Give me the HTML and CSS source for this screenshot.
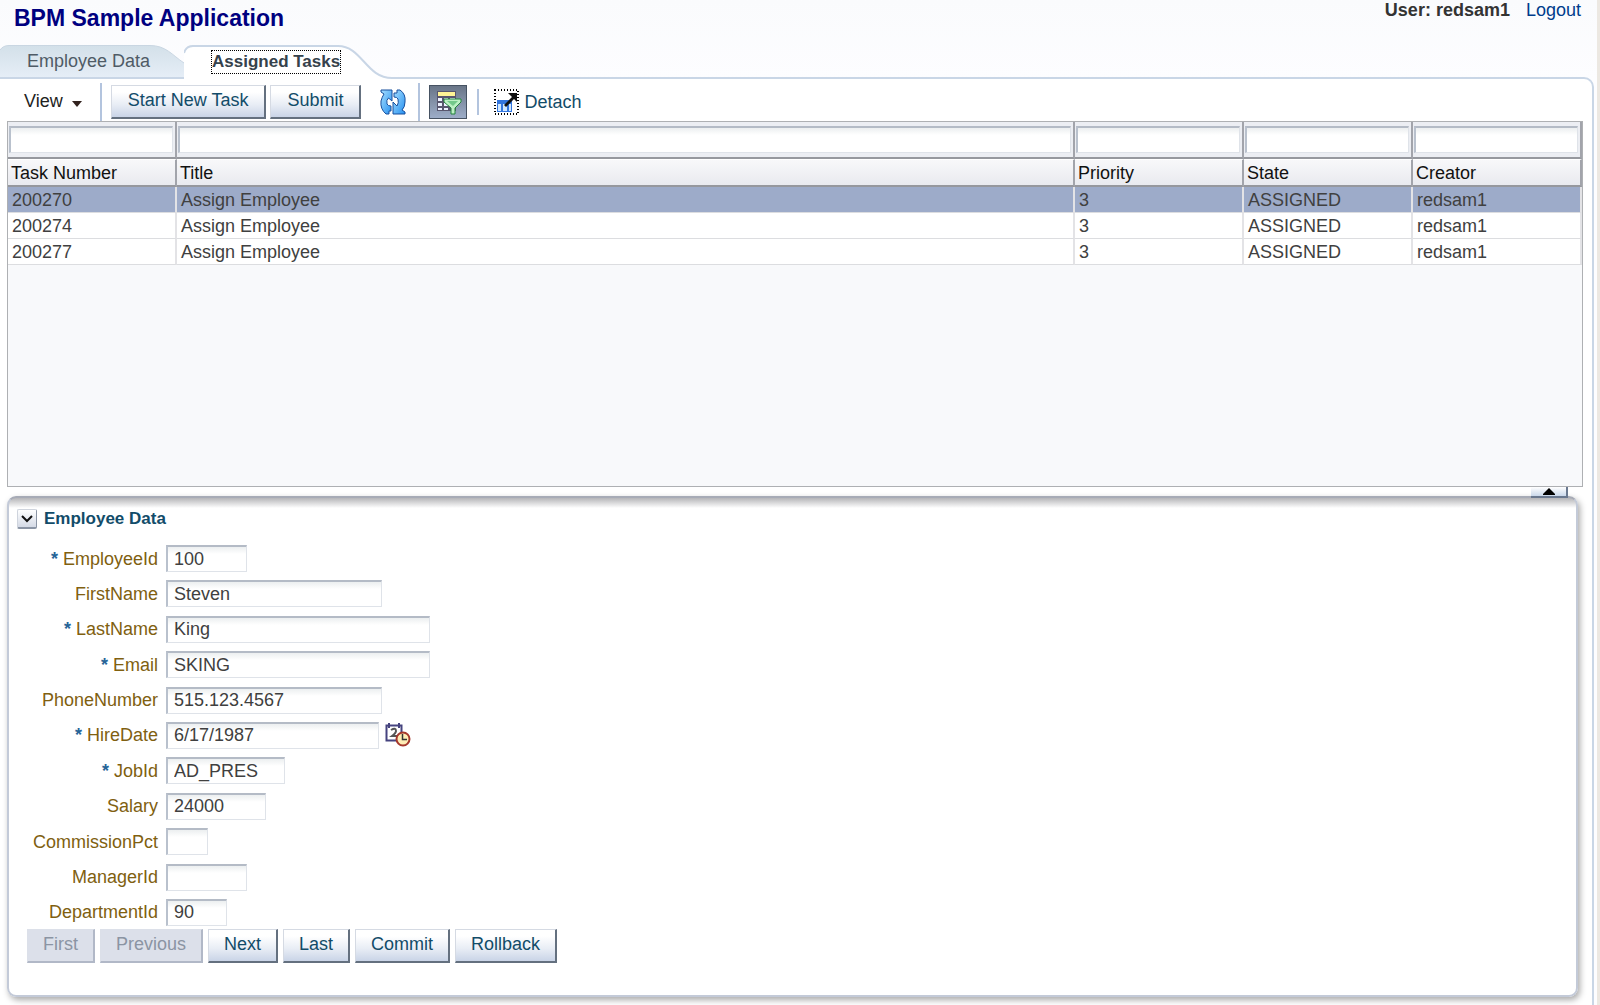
FILE: index.html
```html
<!DOCTYPE html>
<html lang="en">
<head>
<meta charset="utf-8">
<meta name="viewport" content="width=device-width, initial-scale=1">
<title>BPM Sample Application</title>
<link rel="stylesheet" href="styles.css">
</head>
<body>
<header class="header">
  <h1 class="title">BPM Sample Application</h1>
  <div class="user"><strong>User: redsam1</strong><a href="#logout">Logout</a></div>
</header>
<nav class="tabs">
  <a class="tab tab-data" href="#data">
    <svg class="tab-shape" viewBox="0 0 184 34" preserveAspectRatio="none" aria-hidden="true"><defs><linearGradient id="tg" x1="0" y1="0" x2="0" y2="1"><stop offset="0" stop-color="#d3e0e9"/><stop offset="1" stop-color="#e6eef7"/></linearGradient></defs><path d="M0 5Q3 .5 9 .5H150C166 .5 172 10 184 18V33H0Z" fill="url(#tg)"/><path d="M0 5Q3 .5 9 .5H150C166 .5 172 10 184 18" fill="none" stroke="#c9d6e2"/><path d="M0 33H184" stroke="#c9d6e6" stroke-width="2"/></svg>
    <span>Employee Data</span>
  </a>
  <a class="tab tab-tasks" href="#tasks" aria-current="page">
    <svg class="tab-shape" viewBox="0 0 208 34" preserveAspectRatio="none" aria-hidden="true"><path d="M0 34V8Q2 1 9 1H154C178 1 182 33 208 33V34Z" fill="#fff"/><path d="M0 8Q2 1 9 1H154C178 1 182 33 208 33" fill="none" stroke="#c9d6e6" stroke-width="2"/></svg>
    <span class="focus">Assigned Tasks</span>
  </a>
</nav>
<main class="frame">
  <div class="toolbar">
    <button class="view" type="button">View<svg width="10" height="6" viewBox="0 0 10 6" aria-hidden="true"><path d="M0 0H10L5 6Z" fill="#32221e"/></svg></button>
    <span class="sep tall"></span>
    <button class="btn" type="button">Start New Task</button>
    <button class="btn" type="button">Submit</button>
    <button class="icon-btn refresh" type="button" aria-label="Refresh"><svg width="28" height="28" viewBox="0 0 28 28"><defs><linearGradient id="bl" x1="0" y1="0" x2="1" y2="1"><stop offset="0" stop-color="#a8e0ff"/><stop offset="1" stop-color="#248ff0"/></linearGradient></defs><path d="M2 2H13V13L9.500 10Q7 12 8 16Q9 18 12 18V23H10V26H7Q1 21 2 13Q3 9 5 6L2 4Z" fill="url(#bl)" stroke="#164f9d"/><path d="M18 2H21Q27 6 26 14Q26 19 23 22L26 24V26H14V14L18 18Q20 15 19 11Q18 9 15 9V5H18Z" fill="url(#bl)" stroke="#164f9d"/></svg></button>
    <span class="sep tall"></span>
    <button class="filter" type="button" aria-label="Query by example" aria-pressed="true"><svg width="28" height="28" viewBox="0 0 28 28"><path d="M3 3H22V23H3Z" fill="#58566e"/><path d="M4 4H21V8H4Z" fill="#fff496"/><path d="M4 10H8V13H4ZM10 10H14V13H10ZM16 10H21V13H16ZM4 15H8V18H4ZM10 15H14V18H10ZM4 20H8V22H4ZM10 20H14V22H10Z" fill="#eef1ff"/><path d="M10 11H27V14L21 20V26H17V20L10 14Z" fill="#bdf0c4" stroke="#23843d"/><path d="M13 13H24L19 18Z" fill="#73c98a"/></svg></button>
    <span class="sep"></span>
    <button class="detach" type="button"><svg width="26" height="27" viewBox="0 0 26 27" aria-hidden="true"><rect x="1" y="1" width="23" height="24" fill="none" stroke="#000" stroke-width="2" stroke-dasharray="1 2"/><path d="M3 11H18V23H3Z" fill="#3376df"/><path d="M4 15H7V22H4ZM9 15H13V22H9ZM15 15H17V22H15Z" fill="#cfe7ff"/><path d="M14 4H23V13L20 10L12 18L10 16L18 8Z" fill="#111"/></svg><span>Detach</span></button>
  </div>
  <section class="grid-box" aria-label="Tasks">
    <table class="grid">
      <colgroup><col class="c-num"><col><col class="c-num"><col class="c-num"><col class="c-num"></colgroup>
      <thead>
        <tr class="filters">
          <td><input type="text" aria-label="Filter Task Number"></td>
          <td><input type="text" aria-label="Filter Title"></td>
          <td><input type="text" aria-label="Filter Priority"></td>
          <td><input type="text" aria-label="Filter State"></td>
          <td><input type="text" aria-label="Filter Creator"></td>
        </tr>
        <tr class="heads"><th>Task Number</th><th>Title</th><th>Priority</th><th>State</th><th>Creator</th></tr>
      </thead>
      <tbody>
        <tr class="selected"><td>200270</td><td>Assign Employee</td><td>3</td><td>ASSIGNED</td><td>redsam1</td></tr>
        <tr><td>200274</td><td>Assign Employee</td><td>3</td><td>ASSIGNED</td><td>redsam1</td></tr>
        <tr><td>200277</td><td>Assign Employee</td><td>3</td><td>ASSIGNED</td><td>redsam1</td></tr>
      </tbody>
    </table>
  </section>
  <div class="splitter"><button type="button" aria-label="Collapse tasks"><svg width="12" height="7" viewBox="0 0 12 7"><path d="M0 7V6L6 0L12 6V7Z"/></svg></button></div>
  <section class="panel">
    <div class="panel-head">
      <button class="disclose" type="button" aria-label="Hide Employee Data"><svg width="12" height="8" viewBox="0 0 12 8"><path d="M1 1L6 6L11 1" fill="none" stroke="#111" stroke-width="2"/></svg></button>
      <h2>Employee Data</h2>
    </div>
    <form class="form">
      <div class="fields">
        <label for="eid"><b>*</b> EmployeeId</label><input class="w81" id="eid" value="100">
        <label for="fn">FirstName</label><input class="w216" id="fn" value="Steven">
        <label for="ln"><b>*</b> LastName</label><input class="w264" id="ln" value="King">
        <label for="em"><b>*</b> Email</label><input class="w264" id="em" value="SKING">
        <label for="ph">PhoneNumber</label><input class="w216" id="ph" value="515.123.4567">
        <label for="hd"><b>*</b> HireDate</label>
        <div class="date"><input class="w213" id="hd" value="6/17/1987"><button class="icon-btn" type="button" aria-label="Select Date and Time"><svg width="26" height="26" viewBox="0 0 26 26"><path d="M1.500 3.500H16.500V18.500H1.500Z" fill="#fff" stroke="#45437f" stroke-width="2"/><path d="M4 1V6M14 1V6" stroke="#45437f" stroke-width="2"/><path d="M6 8Q11 5 11 9Q11 11 7 14H12" fill="none" stroke="#555" stroke-width="2"/><circle cx="18" cy="17" r="6.500" fill="#ffedb5" stroke="#a5382d" stroke-width="2"/><path d="M17.500 12V17.500H22" fill="none" stroke="#333" stroke-width="1.500"/></svg></button></div>
        <label for="job"><b>*</b> JobId</label><input class="w119" id="job" value="AD_PRES">
        <label for="sal">Salary</label><input class="w100" id="sal" value="24000">
        <label for="com">CommissionPct</label><input class="w42" id="com">
        <label for="man">ManagerId</label><input class="w81" id="man">
        <label for="dep">DepartmentId</label><input class="w61" id="dep" value="90">
      </div>
      <div class="actions">
        <button class="btn" type="button" disabled>First</button>
        <button class="btn" type="button" disabled>Previous</button>
        <button class="btn" type="button">Next</button>
        <button class="btn" type="button">Last</button>
        <button class="btn" type="button">Commit</button>
        <button class="btn" type="button">Rollback</button>
      </div>
    </form>
  </section>
</main>
</body>
</html>
```
FILE: styles.css
```css
* { box-sizing: border-box; }

body {
  margin: 0;
  min-height: 100vh;
  display: flex;
  flex-direction: column;
  border-right: 3px solid #ece8e2;
  background: linear-gradient(#fafbfd, #fdfdff 80px);
  color: #404040;
  font: 18px/20px "Liberation Sans", Arial, sans-serif;
}

button, input { margin: 0; font: inherit; color: inherit; }
button { padding: 0; border: 0; background: none; }
svg { display: block; flex: none; }

/* Header */
.header {
  display: flex;
  justify-content: space-between;
  height: 45px;
  padding: 0 16px 0 14px;
}
.title { margin: 6px 0 0; font-size: 23px; line-height: 24px; color: #000080; }
.user { display: flex; gap: 16px; color: #333; }
.user a { color: #003c8c; text-decoration: none; }

/* Tabs */
.tabs { position: relative; z-index: 1; display: flex; height: 34px; }
.tab {
  position: relative;
  display: flex;
  padding-top: 6px;
  color: #4f5b66;
  text-decoration: none;
}
.tab-shape { position: absolute; inset: 0; width: 100%; height: 100%; }
.tab span { position: relative; }
.tab-data { width: 184px; padding-left: 27px; }
.tab-tasks { width: 208px; padding: 5px 0 0 27px; }
.focus {
  height: 24px;
  border: 1px dotted #000;
  font-size: 17px;
  line-height: 22px;
  font-weight: bold;
  color: #36424c;
}

/* Content frame, its top line runs on from the tabs */
.frame {
  flex: 1;
  display: flex;
  flex-direction: column;
  margin: -2px 3px 0 0;
  padding: 4px 9px 8px 7px;
  border-top: 2px solid #c9d6e6;
  border-right: 2px solid #c9d6e6;
  border-top-right-radius: 10px;
  background: #fff;
}

/* Toolbar */
.toolbar { display: flex; align-items: center; height: 38px; gap: 4px; }
.view { display: flex; align-items: center; gap: 9px; margin: 0 14px 0 17px; padding-bottom: 2px; color: #222; }
.view svg { margin-top: 6px; }
.sep { width: 2px; height: 26px; margin: 0 11px 0 6px; background: #b3c4de; }
.sep.tall { height: 38px; margin: 0 5px 0 0; }
.btn {
  height: 34px;
  padding: 0 16px 4px;
  border: 1px solid #d5dae3;
  border-right: 2px solid #64707f;
  border-bottom: 2px solid #64707f;
  background: linear-gradient(#fff 20%, #e8edf5 60%, #c9d4e7);
  color: #124c69;
}
.btn:disabled {
  border-color: #dce0e9 #b1b8c7 #b1b8c7 #dce0e9;
  background: #dce0ea;
  color: #8b94a3;
}
.refresh { margin: 0 7px 0 14px; }
.filter {
  display: grid;
  place-items: center;
  width: 38px;
  height: 34px;
  border: 1px solid #465262;
  background: linear-gradient(#697587, #9dadc8);
}
.detach { display: flex; align-items: center; gap: 4px; color: #124c69; }

/* Task grid */
.grid-box { height: 366px; border: 1px solid #aeb0b3; background: #f8f9fb; }
.grid { width: 100%; table-layout: fixed; border-collapse: separate; border-spacing: 0; }
.c-num { width: 169px; }
.filters td {
  height: 37px;
  padding: 1px 2px 1px 1px;
  border-right: 2px solid #a2a4ab;
  border-bottom: 2px solid #96989e;
  background: #eceef3;
}
.filters input { display: block; width: 100%; height: 27px; }
.heads th {
  height: 28px;
  padding: 0 3px;
  border-top: 1px solid #fff;
  border-right: 2px solid #a2a4ab;
  border-bottom: 2px solid #96989e;
  background: linear-gradient(#f8f8fa, #e9eaef);
  color: #111;
  font-weight: normal;
  text-align: left;
}
tbody td {
  height: 26px;
  padding: 0 4px;
  border-right: 2px solid #e3e3e6;
  border-bottom: 1px solid #dcdde0;
  background: #fff;
}
.selected td { background: #9dabc9; }

/* Text boxes */
input {
  height: 27px;
  padding: 0 6px;
  border: 1px solid #dfe3e9;
  border-top: 2px solid #b4bbc6;
  border-left: 2px solid #b9c1cd;
  background: linear-gradient(#eceff0, #fff 7px);
  outline: 0;
}

/* Splitter, its handle laps over the panel's edge */
.splitter {
  position: relative;
  z-index: 1;
  display: flex;
  justify-content: flex-end;
  height: 9px;
  padding-right: 15px;
}
.splitter button {
  display: grid;
  place-items: center;
  width: 37px;
  height: 11px;
  border-right: 2px solid #69788f;
  border-bottom: 2px solid #69788f;
  background: linear-gradient(#fff, #cad8eb);
}

/* Employee panel */
.panel {
  flex: 1;
  margin-right: 5px;
  padding: 11px 9px 32px 8px;
  border: 2px solid #c3cad8;
  border-top-color: #a7abb6;
  border-radius: 9px;
  background: linear-gradient(#b5b5b8, #fff 10px);
  box-shadow: 2px 3px 6px #aaa;
}
.panel-head { display: flex; align-items: center; gap: 7px; height: 20px; }
.panel-head h2 { margin: 0; font-size: 17px; line-height: 20px; color: #124c69; }
.disclose {
  display: grid;
  place-items: center;
  width: 20px;
  height: 20px;
  border: 1px solid #cfd4dd;
  border-right-color: #8b95a5;
  border-bottom: 2px solid #8b95a5;
  border-radius: 2px;
  background: linear-gradient(#fff, #d4dae6);
}
.form { padding-top: 16px; }
.fields {
  display: grid;
  grid-template-columns: 141px 1fr;
  grid-template-rows: repeat(11, 27px);
  align-content: space-between;
  align-items: center;
  column-gap: 8px;
  height: 381px;
}
.fields label { text-align: right; color: #806010; white-space: nowrap; }
.fields label b { color: #276497; }
.date { display: flex; gap: 6px; height: 27px; }
.w42 { width: 42px; }
.w61 { width: 61px; }
.w81 { width: 81px; }
.w100 { width: 100px; }
.w119 { width: 119px; }
.w213 { width: 213px; }
.w216 { width: 216px; }
.w264 { width: 264px; }
.actions { display: flex; gap: 5px; padding: 3px 0 0 10px; }
.actions .btn { padding: 0 15px 4px; }
```
